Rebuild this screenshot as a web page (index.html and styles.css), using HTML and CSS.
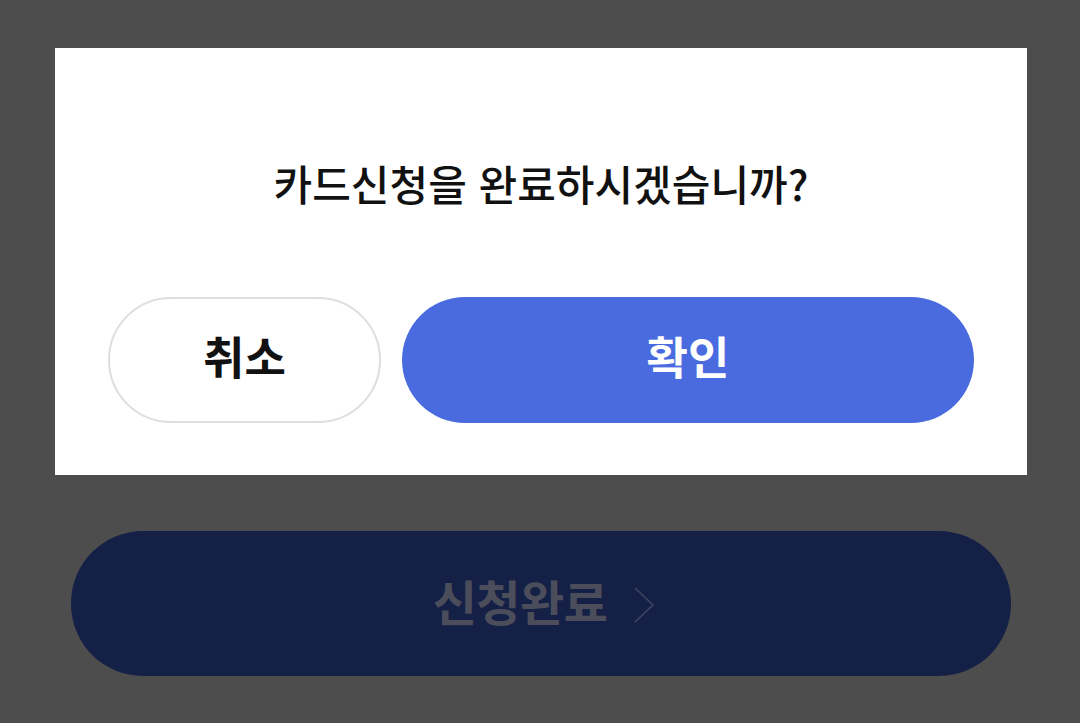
FILE: index.html
```html
<!DOCTYPE html>
<html lang="ko">
<head>
<meta charset="utf-8">
<link rel="stylesheet" href="styles.css">
</head>
<body>
<div class="page">
  <div class="dialog">
    <p class="dialog-title">카드신청을 완료하시겠습니까?</p>
    <div class="dialog-actions">
      <button class="btn btn-cancel">취소</button>
      <button class="btn btn-confirm">확인</button>
    </div>
  </div>
  <button class="submit">
    <span class="submit-label">신청완료</span>
    <svg class="chevron" width="22" height="38" viewBox="0 0 22 38"><path d="M2 2 L20 19 L2 36" fill="none" stroke="#3e4561" stroke-width="1.6"/></svg>
  </button>
</div>
</body>
</html>
```

FILE: styles.css
```css
html, body {
  margin: 0;
  padding: 0;
  background: #4d4d4d;
  width: 1080px;
  height: 723px;
  overflow: hidden;
}
body {
  font-family: "Noto Sans CJK KR", "Noto Sans", sans-serif;
}
.page {
  display: flex;
  flex-direction: column;
  padding-top: 48px;
}
.dialog {
  margin-left: 55px;
  width: 972px;
  height: 427px;
  background: #ffffff;
  box-sizing: border-box;
  display: flex;
  flex-direction: column;
  align-items: center;
}
.dialog-title {
  margin: 107px 0 0;
  height: 56px;
  line-height: 56px;
  font-size: 42px;
  font-weight: 500;
  color: #111111;
  letter-spacing: 0;
}
.dialog-actions {
  margin-top: 86px;
  display: flex;
  gap: 21px;
  width: 866px;
}
.btn {
  height: 126px;
  border-radius: 63px;
  font-family: inherit;
  font-size: 45px;
  font-weight: 700;
  display: flex;
  align-items: center;
  justify-content: center;
  padding: 0;
  padding-bottom: 10px;
  box-sizing: border-box;
}
.btn-cancel {
  width: 273px;
  background: #ffffff;
  border: 2px solid #dedede;
  color: #111111;
}
.btn-confirm {
  width: 572px;
  background: #4a6bdf;
  border: none;
  color: #ffffff;
}
.submit {
  margin: 56px 0 0 71px;
  width: 940px;
  height: 145px;
  border-radius: 72px;
  background: #152047;
  border: none;
  display: flex;
  align-items: center;
  justify-content: center;
  gap: 26px;
  padding: 0 0 8px 6px;
  box-sizing: border-box;
  font-family: inherit;
}
.submit-label {
  font-size: 48px;
  font-weight: 700;
  color: #4b4e5a;
  letter-spacing: -0.5px;
}
.chevron {
  display: block;
  margin-top: 10px;
}
```
